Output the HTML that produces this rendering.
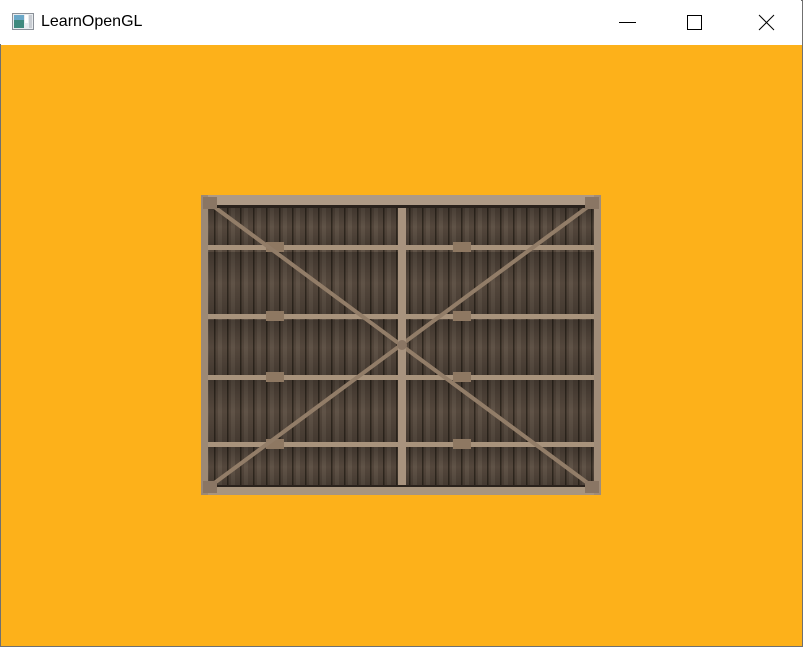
<!DOCTYPE html>
<html><head><meta charset="utf-8"><style>
html,body{margin:0;padding:0;}
body{width:803px;height:647px;position:relative;overflow:hidden;background:#fff;font-family:"Segoe UI","Liberation Sans",sans-serif;}
#frame{position:absolute;left:0;top:0;width:801px;height:645px;border:1px solid #707070;border-top-color:#6a6a6a;}
#title{position:absolute;left:0;top:0;width:801px;height:44px;background:#fff;}
#title .t{position:absolute;left:41px;top:13px;font-size:16px;color:#000;}
#gl{position:absolute;left:1px;top:45px;width:801px;height:601px;background:#fdb11a;}
</style></head><body>
<div id="frame"></div>
<div id="title">
<svg style="position:absolute;left:12px;top:13px" width="22" height="18" viewBox="0 0 22 18">
<rect x="0.5" y="0.5" width="21" height="16" fill="#e8ecef" stroke="#8a9098"/>
<rect x="2" y="2" width="10" height="13" fill="#3f8a7e"/>
<rect x="2" y="2" width="10" height="5" fill="#6aa8c8"/>
<rect x="13" y="2" width="3" height="8" fill="#fff"/>
<rect x="17" y="2" width="3" height="13" fill="#c8ccd2"/>
</svg>
<div class="t">LearnOpenGL</div>
<svg style="position:absolute;left:618px;top:14px" width="160" height="18">
<line x1="1" y1="8.5" x2="18" y2="8.5" stroke="#000" stroke-width="1"/>
<rect x="69.5" y="1.5" width="14" height="14" fill="none" stroke="#000"/>
<line x1="141" y1="1" x2="156" y2="16" stroke="#000"/>
<line x1="156" y1="1" x2="141" y2="16" stroke="#000"/>
</svg>
</div>
<div id="gl"></div>
<svg style="position:absolute;left:201px;top:195px" width="400" height="300" viewBox="0 0 400 300">
<defs>
<pattern id="pl" width="13" height="300" patternUnits="userSpaceOnUse">
<rect width="13" height="300" fill="#54473c"/>
<rect x="0" width="1.5" height="300" fill="#30281f"/>
<rect x="4" width="4" height="300" fill="#65584b" opacity="0.7"/>
</pattern>
<linearGradient id="sh" x1="0" y1="0" x2="0" y2="1">
<stop offset="0" stop-color="#000" stop-opacity="0.25"/>
<stop offset="0.5" stop-color="#000" stop-opacity="0"/>
<stop offset="1" stop-color="#000" stop-opacity="0.2"/>
</linearGradient>
</defs>
<rect width="400" height="300" fill="url(#pl)"/>
<rect x="0" y="12" width="400" height="40" fill="url(#sh)"/>
<rect x="0" y="57" width="400" height="63" fill="url(#sh)"/>
<rect x="0" y="125" width="400" height="55" fill="url(#sh)"/>
<rect x="0" y="185" width="400" height="63" fill="url(#sh)"/>
<rect x="0" y="252" width="400" height="40" fill="url(#sh)"/>
<g fill="#a8937c">
<rect x="0" y="50" width="400" height="5"/>
<rect x="0" y="119" width="400" height="5"/>
<rect x="0" y="180" width="400" height="5"/>
<rect x="0" y="247" width="400" height="5"/>
</g>
<g fill="#8e7862">
<rect x="65" y="47" width="18" height="10"/><rect x="252" y="47" width="18" height="10"/>
<rect x="65" y="116" width="18" height="10"/><rect x="252" y="116" width="18" height="10"/>
<rect x="65" y="177" width="18" height="10"/><rect x="252" y="177" width="18" height="10"/>
<rect x="65" y="244" width="18" height="10"/><rect x="252" y="244" width="18" height="10"/>
</g>
<g stroke="#927d68" stroke-width="4">
<line x1="8" y1="8" x2="392" y2="292"/>
<line x1="392" y1="8" x2="8" y2="292"/>
</g>
<rect x="197" y="0" width="8" height="300" fill="#a8937e"/>
<rect x="0" y="0" width="400" height="10" fill="#ae9a86"/>
<rect x="0" y="10" width="400" height="3" fill="#2a221c"/>
<rect x="0" y="292" width="400" height="8" fill="#a8957f"/>
<rect x="0" y="290" width="400" height="2" fill="#2a221c"/>
<rect x="0" y="0" width="7" height="300" fill="#9c8975"/>
<rect x="393" y="0" width="7" height="300" fill="#a08c78"/>
<g fill="#8a7664">
<rect x="2" y="2" width="14" height="12"/><rect x="384" y="2" width="14" height="12"/>
<rect x="2" y="286" width="14" height="12"/><rect x="384" y="286" width="14" height="12"/>
<circle cx="201" cy="150" r="5"/>
</g>
</svg>
</body></html>
